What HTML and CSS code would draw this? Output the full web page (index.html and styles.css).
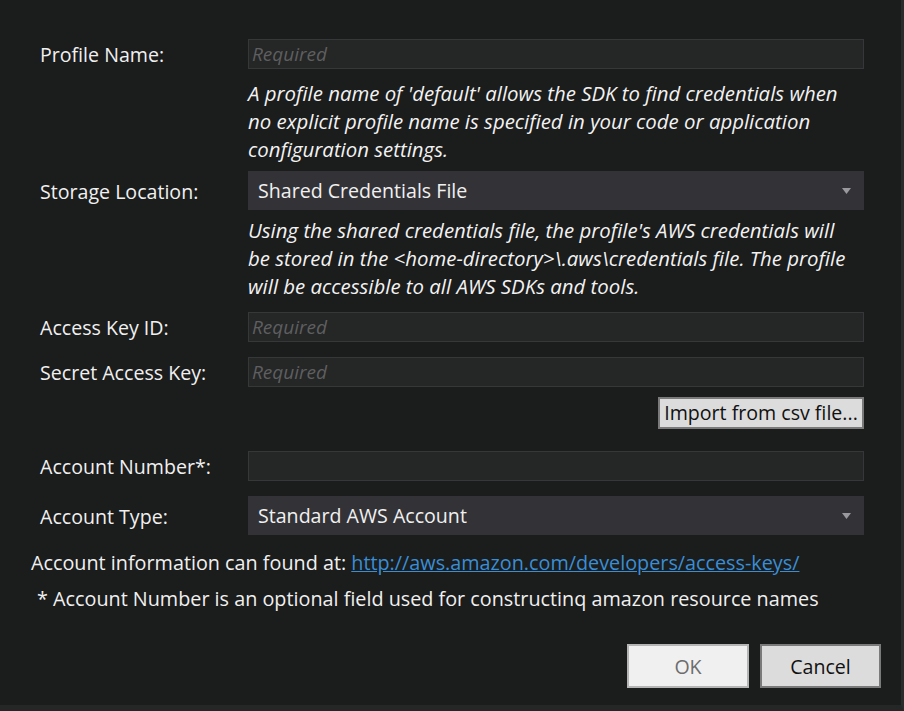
FILE: index.html
```html
<!DOCTYPE html>
<html>
<head>
<meta charset="utf-8">
<link rel="stylesheet" href="styles.css">
</head>
<body>
<div class="dialog">
  <div class="form">
    <div class="row r-profile">
      <label class="lbl">Profile Name:</label>
      <div class="input"><span class="ph">Required</span></div>
    </div>
    <div class="help h1">A profile name of 'default' allows the SDK to find credentials when<br>no explicit profile name is specified in your code or application<br>configuration settings.</div>

    <div class="row r-storage">
      <label class="lbl">Storage Location:</label>
      <div class="select"><span>Shared Credentials File</span><svg class="arrow" width="9" height="6" viewBox="0 0 9 6"><path d="M0 0H9L4.5 6Z" fill="#9a9a9e"/></svg></div>
    </div>
    <div class="help h2">Using the shared credentials file, the profile's AWS credentials will<br>be stored in the &lt;home-directory&gt;\.aws\credentials file. The profile<br>will be accessible to all AWS SDKs and tools.</div>

    <div class="row r-access">
      <label class="lbl">Access Key ID:</label>
      <div class="input"><span class="ph">Required</span></div>
    </div>
    <div class="row r-secret">
      <label class="lbl">Secret Access Key:</label>
      <div class="input"><span class="ph">Required</span></div>
    </div>
    <div class="import-row"><button class="btn import">Import from csv file...</button></div>

    <div class="row r-number">
      <label class="lbl">Account Number*:</label>
      <div class="input"></div>
    </div>
    <div class="row r-type">
      <label class="lbl">Account Type:</label>
      <div class="select"><span>Standard AWS Account</span><svg class="arrow" width="9" height="6" viewBox="0 0 9 6"><path d="M0 0H9L4.5 6Z" fill="#9a9a9e"/></svg></div>
    </div>
  </div>
  <p class="info">Account information can found at: <a href="#">http://aws.amazon.com/developers/access-keys/</a></p>
  <p class="note">* Account Number is an optional field used for constructinq amazon resource names</p>
  <div class="buttons">
    <button class="btn ok">OK</button>
    <button class="btn cancel">Cancel</button>
  </div>
</div>
</body>
</html>
```
FILE: styles.css
```css
html, body {
  margin: 0;
  padding: 0;
  background: #1b1c1c;
}
body {
  width: 904px;
  height: 711px;
  overflow: hidden;
  font-family: "Open Sans", "Noto Sans", sans-serif;
  color: #f0f0f0;
  font-size: 19.6px;
  box-sizing: border-box;
  border-right: 3px solid #2a2b2b;
  border-bottom: 6px solid #252626;
}
.dialog {
  padding-top: 39px;
  width: 881px;
}
.form {
  width: 864px;
  display: flex;
  flex-direction: column;
}
.row {
  display: grid;
  grid-template-columns: 248px 616px;
  align-items: center;
}
.lbl {
  padding-left: 40px;
  line-height: 24px;
  padding-top: 2px;
}
.input {
  height: 30px;
  box-sizing: border-box;
  background: #252626;
  border: 1px solid #363738;
  display: flex;
  align-items: center;
  padding-left: 3px;
}
.ph {
  color: #5e5f60;
  font-style: italic;
  font-size: 19px;
}
.select {
  height: 39px;
  box-sizing: border-box;
  background: #333337;
  display: flex;
  align-items: center;
  justify-content: space-between;
  padding: 0 13px 0 10px;
}
.help {
  margin-left: 248px;
  width: 616px;
  font-style: italic;
  font-size: 20.4px;
  line-height: 28px;
  padding-top: 10px;
  color: #f2f2f2;
  box-sizing: border-box;
  white-space: nowrap;
}
.h1 { height: 102px; }
.h2 { height: 102px; padding-top: 6px; }
.r-secret { margin-top: 15px; }
.import-row {
  display: flex;
  justify-content: flex-end;
  margin-top: 10px;
}
.btn {
  font-family: "Open Sans", "Noto Sans", sans-serif;
  font-size: 19.6px;
  box-sizing: border-box;
  border: 2px solid #7a7a7a;
  background: #dcdcdc;
  color: #111;
  padding: 0;
}
.import {
  width: 206px;
  height: 32px;
  line-height: 26px;
}
.r-number { margin-top: 22px; }
.r-type { margin-top: 15px; }
.info {
  margin: 16px 0 0 31px;
  line-height: 24px;
  font-size: 19.8px;
}
.info a {
  color: #3a8ed4;
  text-decoration: underline;
}
.note {
  margin: 12px 0 0 37px;
  line-height: 24px;
  font-size: 19.8px;
}
.buttons {
  display: flex;
  justify-content: flex-end;
  gap: 11px;
  margin-top: 33px;
}
.ok, .cancel {
  width: 122px;
  height: 44px;
}
.ok {
  background: #f0f0f0;
  border-color: #b5b5b5;
  color: #6d6d6d;
}
.cancel {
  width: 121px;
}
```
